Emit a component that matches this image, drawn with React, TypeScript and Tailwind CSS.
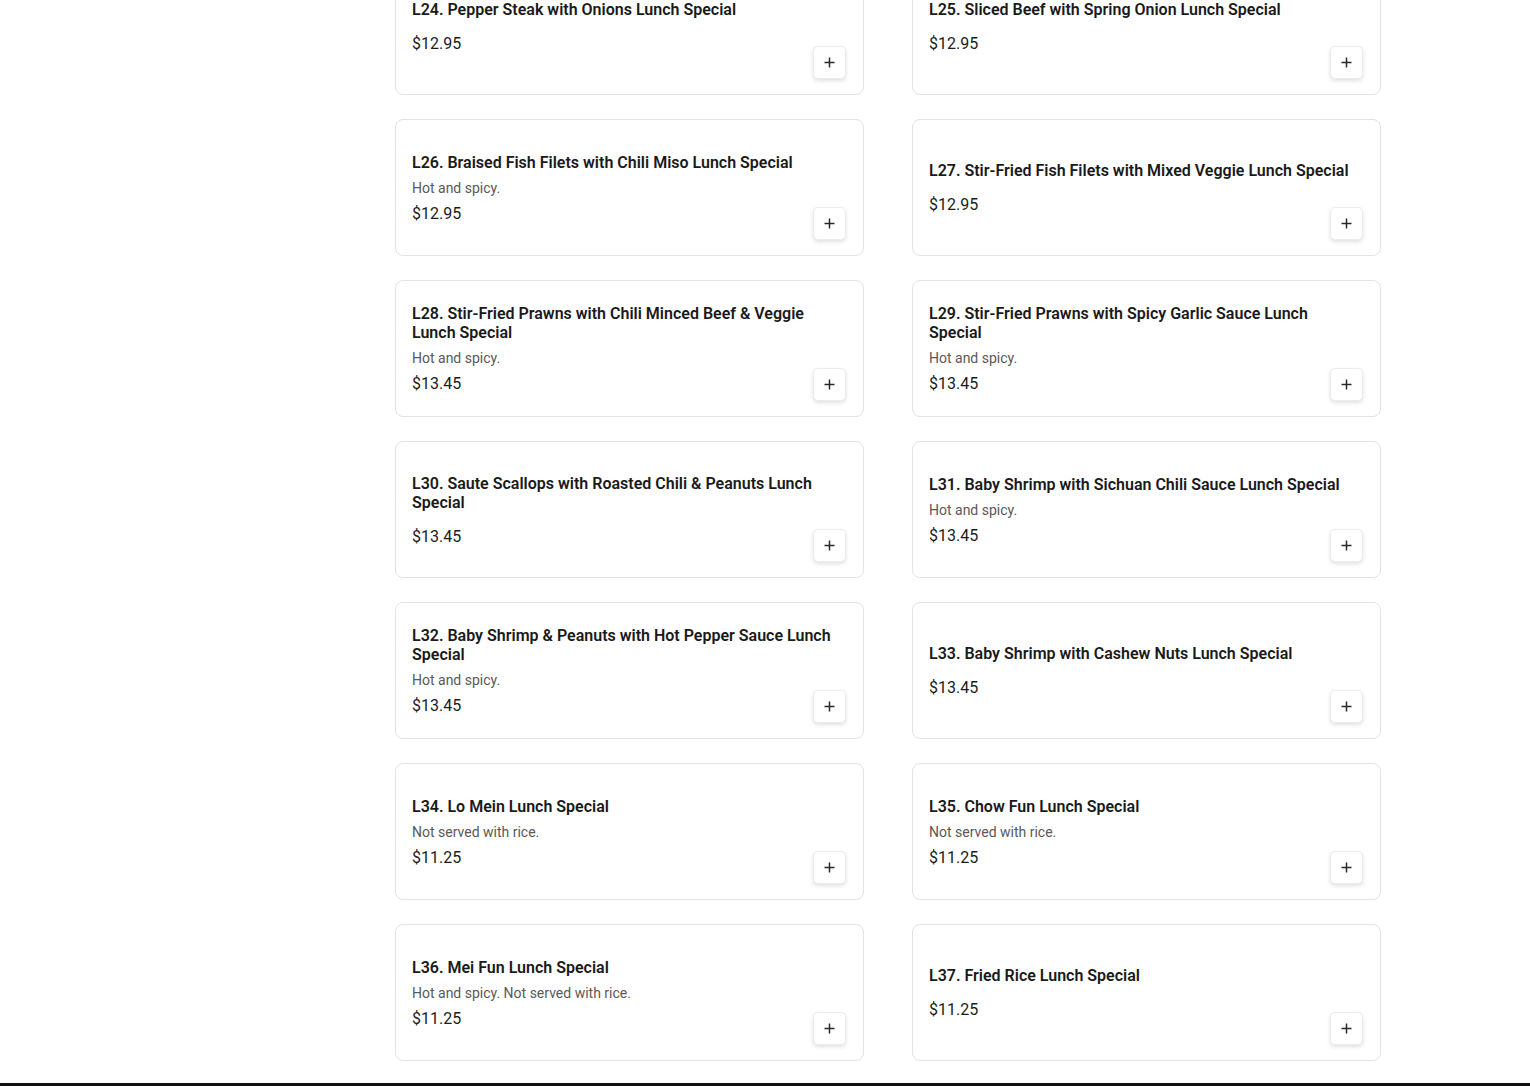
import React from "react";

type Item = { title: string; desc?: string; price: string };

const items: Item[] = [
  { title: "L24. Pepper Steak with Onions Lunch Special", price: "$12.95" },
  { title: "L25. Sliced Beef with Spring Onion Lunch Special", price: "$12.95" },
  { title: "L26. Braised Fish Filets with Chili Miso Lunch Special", desc: "Hot and spicy.", price: "$12.95" },
  { title: "L27. Stir-Fried Fish Filets with Mixed Veggie Lunch Special", price: "$12.95" },
  { title: "L28. Stir-Fried Prawns with Chili Minced Beef & Veggie Lunch Special", desc: "Hot and spicy.", price: "$13.45" },
  { title: "L29. Stir-Fried Prawns with Spicy Garlic Sauce Lunch Special", desc: "Hot and spicy.", price: "$13.45" },
  { title: "L30. Saute Scallops with Roasted Chili & Peanuts Lunch Special", price: "$13.45" },
  { title: "L31. Baby Shrimp with Sichuan Chili Sauce Lunch Special", desc: "Hot and spicy.", price: "$13.45" },
  { title: "L32. Baby Shrimp & Peanuts with Hot Pepper Sauce Lunch Special", desc: "Hot and spicy.", price: "$13.45" },
  { title: "L33. Baby Shrimp with Cashew Nuts Lunch Special", price: "$13.45" },
  { title: "L34. Lo Mein Lunch Special", desc: "Not served with rice.", price: "$11.25" },
  { title: "L35. Chow Fun Lunch Special", desc: "Not served with rice.", price: "$11.25" },
  { title: "L36. Mei Fun Lunch Special", desc: "Hot and spicy. Not served with rice.", price: "$11.25" },
  { title: "L37. Fried Rice Lunch Special", price: "$11.25" },
];

function Card({ item }: { item: Item }) {
  return (
    <div className="grid h-[137px] rounded-lg border border-[#e3e3e3] bg-white px-4 py-[14px]">
      <div className="col-start-1 row-start-1 flex flex-col self-center">
        <div className="text-[16px] font-semibold leading-[19px] text-[#1a1a1a]">{item.title}</div>
        {item.desc && (
          <div className="mt-2 text-[14px] leading-[17px] text-[#595959]">{item.desc}</div>
        )}
        <div
          className={
            (item.desc ? "mt-[7px] " : "mt-[15px] ") +
            "text-[16px] leading-[19px] text-[#1c1c1c]"
          }
        >
          {item.price}
        </div>
      </div>
      <button className="col-start-1 row-start-1 mb-[1px] mr-[1px] flex h-[33px] w-[33px] items-center justify-center self-end justify-self-end rounded-[5px] border border-[#ececec] bg-white shadow-[0_2px_4px_rgba(0,0,0,0.12)]">
        <svg width="11" height="11" viewBox="0 0 11 11">
          <path d="M5.5 0.5v10M0.5 5.5h10" stroke="#2a2a2a" strokeWidth="1.5" />
        </svg>
      </button>
    </div>
  );
}

export default function App() {
  return (
    <div
      className="h-[1086px] overflow-hidden bg-white"
      style={{ fontFamily: "Roboto, 'Noto Sans', Arial, sans-serif" }}
    >
      <div className="flex">
        <div className="w-[395px] shrink-0" />
        <div className="mt-[-42px] grid w-[986px] grid-cols-2 gap-x-[48px] gap-y-[24px]">
          {items.map((it) => (
            <Card key={it.title} item={it} />
          ))}
        </div>
      </div>
      <div className="mt-[22px] h-[40px] bg-[#111111]" />
    </div>
  );
}
